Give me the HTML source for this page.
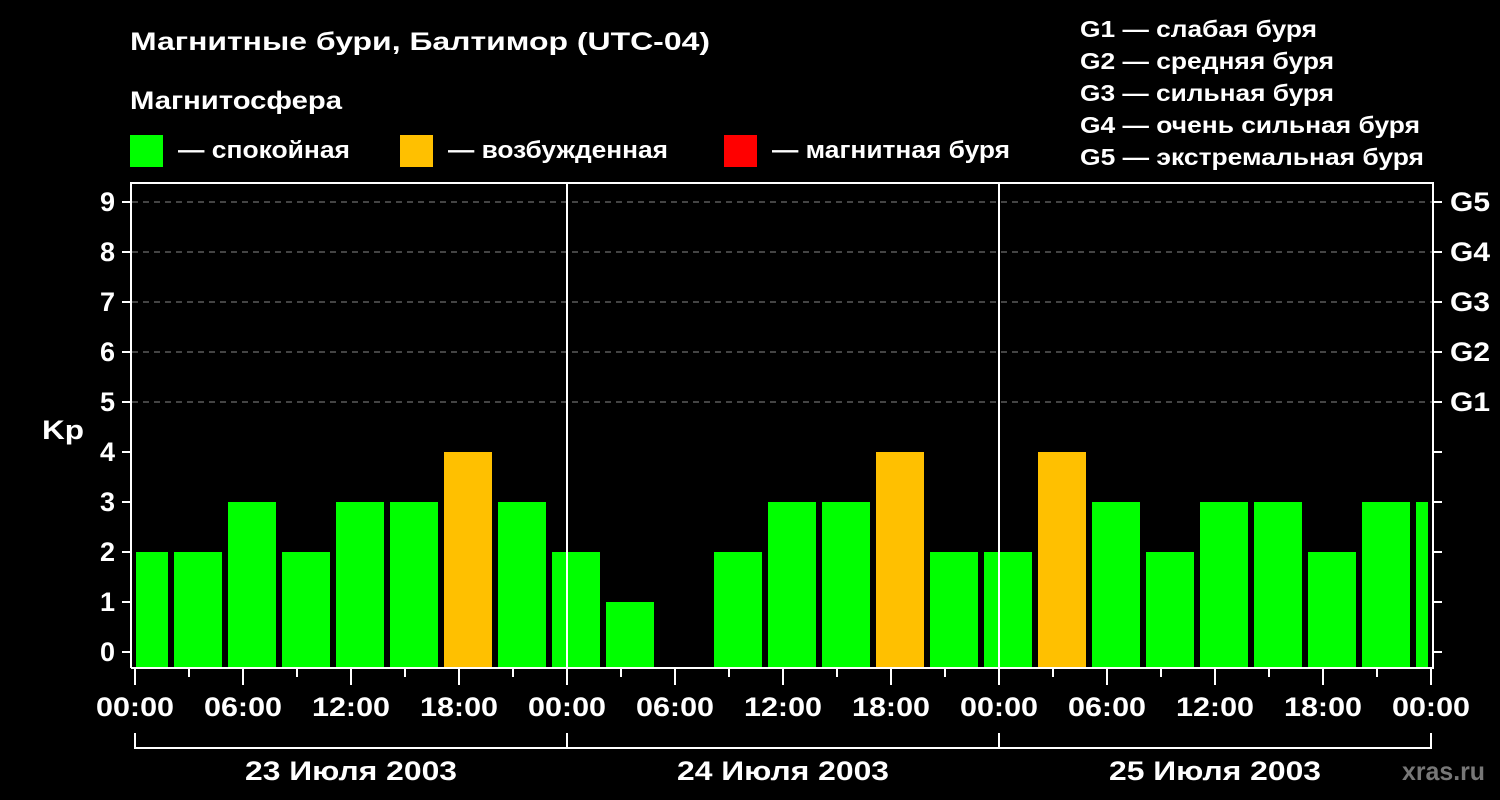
<!DOCTYPE html>
<html><head><meta charset="utf-8"><style>
html,body{margin:0;padding:0;background:#000;}
svg{display:block;}
text{font-family:"Liberation Sans",Arial,sans-serif;font-weight:bold;fill:#fff;}
</style></head><body>
<svg width="1500" height="800" viewBox="0 0 1500 800" xmlns="http://www.w3.org/2000/svg">
<rect width="1500" height="800" fill="#000"/>
<text x="130" y="50" font-size="25" textLength="580" lengthAdjust="spacingAndGlyphs">Магнитные бури, Балтимор (UTC-04)</text>
<text x="130" y="109" font-size="25" textLength="212" lengthAdjust="spacingAndGlyphs">Магнитосфера</text>
<rect x="130" y="135" width="33" height="32" fill="#00ff00"/>
<text x="178" y="158" font-size="24" textLength="172" lengthAdjust="spacingAndGlyphs">— спокойная</text>
<rect x="400" y="135" width="33" height="32" fill="#ffc000"/>
<text x="448" y="158" font-size="24" textLength="220" lengthAdjust="spacingAndGlyphs">— возбужденная</text>
<rect x="724" y="135" width="33" height="32" fill="#ff0000"/>
<text x="772" y="158" font-size="24" textLength="238" lengthAdjust="spacingAndGlyphs">— магнитная буря</text>
<g font-size="23">
<text x="1080" y="37" textLength="237" lengthAdjust="spacingAndGlyphs">G1 — слабая буря</text>
<text x="1080" y="69" textLength="254" lengthAdjust="spacingAndGlyphs">G2 — средняя буря</text>
<text x="1080" y="101" textLength="254" lengthAdjust="spacingAndGlyphs">G3 — сильная буря</text>
<text x="1080" y="133" textLength="340" lengthAdjust="spacingAndGlyphs">G4 — очень сильная буря</text>
<text x="1080" y="165" textLength="344" lengthAdjust="spacingAndGlyphs">G5 — экстремальная буря</text>
</g>
<g stroke="#888" stroke-width="1" stroke-dasharray="6,5">
<line x1="132" y1="202" x2="1432" y2="202"/>
<line x1="132" y1="252" x2="1432" y2="252"/>
<line x1="132" y1="302" x2="1432" y2="302"/>
<line x1="132" y1="352" x2="1432" y2="352"/>
<line x1="132" y1="402" x2="1432" y2="402"/>
</g>
<defs><clipPath id="c"><rect x="136" y="180" width="1292" height="488"/></clipPath></defs>
<g clip-path="url(#c)" id="bars"></g>
<g stroke="#fff" stroke-width="2" fill="none">
<path d="M131 668 V183 H1433 V668 H131"/>
<line x1="567" y1="183" x2="567" y2="668"/>
<line x1="999" y1="183" x2="999" y2="668"/>
<path d="M135 733 V748 H1431 V733 M567 733 V748 M999 733 V748"/>
</g>
<g id="ticks" stroke="#fff" stroke-width="2"></g>
<g font-size="27" text-anchor="end" id="ylab"></g>
<text x="42" y="439" font-size="27" textLength="42" lengthAdjust="spacingAndGlyphs">Kp</text>
<g font-size="27">
<text x="1450" y="411" textLength="40" lengthAdjust="spacingAndGlyphs">G1</text>
<text x="1450" y="361" textLength="40" lengthAdjust="spacingAndGlyphs">G2</text>
<text x="1450" y="311" textLength="40" lengthAdjust="spacingAndGlyphs">G3</text>
<text x="1450" y="261" textLength="40" lengthAdjust="spacingAndGlyphs">G4</text>
<text x="1450" y="211" textLength="40" lengthAdjust="spacingAndGlyphs">G5</text>
</g>
<g font-size="27" id="xlab"></g>
<g font-size="27">
<text x="245" y="780" textLength="212" lengthAdjust="spacingAndGlyphs">23 Июля 2003</text>
<text x="677" y="780" textLength="212" lengthAdjust="spacingAndGlyphs">24 Июля 2003</text>
<text x="1109" y="780" textLength="212" lengthAdjust="spacingAndGlyphs">25 Июля 2003</text>
</g>
<text x="1402" y="780" font-size="26" textLength="83" lengthAdjust="spacingAndGlyphs" style="fill:#777">xras.ru</text>
</svg>
<script>
var ns="http://www.w3.org/2000/svg";
function el(p,t,a,txt){var e=document.createElementNS(ns,t);for(var k in a)e.setAttribute(k,a[k]);if(txt!=null)e.textContent=txt;p.appendChild(e);return e;}
var v=[2,2,3,2,3,3,4,3,2,1,0,2,3,3,4,2,2,4,3,2,3,3,2,3,3];
var bars=document.getElementById('bars');
v.forEach(function(x,k){if(!x)return;el(bars,'rect',{x:120+54*k,y:652-50*x,width:48,height:16+50*x-1,fill:x>=4?'#ffc000':'#00ff00'});});
var t=document.getElementById('ticks'),yl=document.getElementById('ylab'),xl=document.getElementById('xlab');
for(var i=0;i<=9;i++){var y=652-50*i;el(t,'line',{x1:122,y1:y,x2:131,y2:y});el(t,'line',{x1:1433,y1:y,x2:1442,y2:y});el(yl,'text',{x:115,y:y+9},String(i));}
for(var h=0;h<=24;h++){var x=135+54*h;el(t,'line',{x1:x,y1:668,x2:x,y2:h%2==0?685:677});}
var labs=['00:00','06:00','12:00','18:00'];
for(var j=0;j<=12;j++){el(xl,'text',{x:135+108*j-39,y:716,textLength:78,lengthAdjust:'spacingAndGlyphs'},labs[j%4]);}
</script>
</body></html>
